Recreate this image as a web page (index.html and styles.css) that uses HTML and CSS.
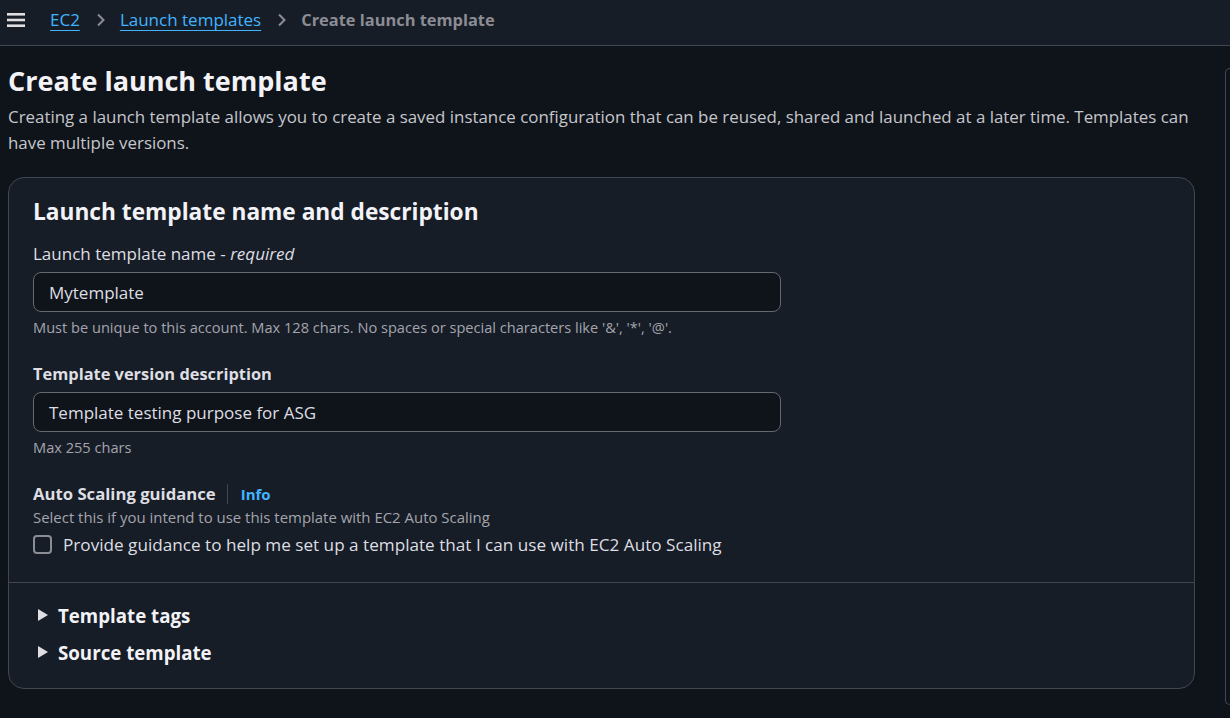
FILE: index.html
```html
<!DOCTYPE html>
<html lang="en">
<head>
<meta charset="utf-8">
<title>Create launch template</title>
<link rel="stylesheet" href="styles.css">
</head>
<body>
<header class="topbar">
  <svg class="menu-icon" width="18" height="16" viewBox="0 0 18 16"><rect x="0" y="1" width="18" height="2.6" fill="#dedee3"/><rect x="0" y="6.7" width="18" height="2.6" fill="#dedee3"/><rect x="0" y="12.4" width="18" height="2.6" fill="#dedee3"/></svg>
  <nav class="crumbs">
    <a class="crumb-link" href="#">EC2</a>
    <svg class="chev" width="10" height="14" viewBox="0 0 10 14"><polyline points="2,1.5 7.5,7 2,12.5" fill="none" stroke="#8c8c94" stroke-width="2"/></svg>
    <a class="crumb-link" href="#">Launch templates</a>
    <svg class="chev" width="10" height="14" viewBox="0 0 10 14"><polyline points="2,1.5 7.5,7 2,12.5" fill="none" stroke="#8c8c94" stroke-width="2"/></svg>
    <span class="crumb-current">Create launch template</span>
  </nav>
</header>
<div class="layout">
  <main class="main">
    <h1 class="page-title">Create launch template</h1>
    <p class="page-desc">Creating a launch template allows you to create a saved instance configuration that can be reused, shared and launched at a later time. Templates can have multiple versions.</p>
    <section class="card">
      <div class="card-body">
        <h2 class="card-title">Launch template name and description</h2>
        <div class="field first">
          <label class="label">Launch template name - <i>required</i></label>
          <div class="input">Mytemplate</div>
          <div class="hint">Must be unique to this account. Max 128 chars. No spaces or special characters like '&amp;', '*', '@'.</div>
        </div>
        <div class="field">
          <label class="label strong">Template version description</label>
          <div class="input">Template testing purpose for ASG</div>
          <div class="hint">Max 255 chars</div>
        </div>
        <div class="field">
          <div class="label-row"><span class="label strong wide">Auto Scaling guidance</span><span class="vsep"></span><a class="info" href="#">Info</a></div>
          <div class="hint tight">Select this if you intend to use this template with EC2 Auto Scaling</div>
          <div class="check-row"><span class="checkbox"></span><span class="check-label">Provide guidance to help me set up a template that I can use with EC2 Auto Scaling</span></div>
        </div>
      </div>
      <div class="card-footer">
        <div class="expander"><span class="tri"></span><span>Template tags</span></div>
        <div class="expander"><span class="tri"></span><span>Source template</span></div>
      </div>
    </section>
  </main>
  <aside class="side-panel"></aside>
</div>
</body>
</html>
```
FILE: styles.css
```css
* { box-sizing: border-box; }
html, body { margin: 0; padding: 0; }
body {
  background: #0f141a;
  color: #dedee3;
  font-family: "Open Sans", "Noto Sans", sans-serif;
  height: 718px;
  overflow: hidden;
}
.topbar {
  height: 46px;
  background: #161d26;
  border-bottom: 1px solid #424650;
  display: flex;
  align-items: center;
  padding: 0 0 6px 7px;
}
.menu-icon { display: block; margin-right: 25px; }
.crumbs { display: flex; align-items: center; font-size: 17px; }
.crumb-link { color: #42b4ff; text-decoration: underline; text-underline-offset: 4px; }
.chev { margin: 0 14px 0 16px; }
.crumb-current { color: #8c8c94; font-weight: 700; font-size: 16.4px; }
.layout { display: flex; }
.main { flex: 1; padding: 17px 30px 0 8px; }
.side-panel {
  width: 5px;
  margin-top: 22px;
  height: 637px;
  border: 1px solid #424650;
  border-right: none;
  border-radius: 16px 0 0 16px;
}
.page-title {
  margin: 0;
  font-size: 27px;
  line-height: 36px;
  font-weight: 700;
  color: #f3f3f7;
}
.page-desc {
  margin: 5px 0 0;
  font-size: 16.9px;
  line-height: 26px;
  color: #c6c6cd;
}
.card {
  margin-top: 21px;
  background: #161d26;
  border: 1px solid #424650;
  border-radius: 16px;
}
.card-body { padding: 19px 24px 26px; border-bottom: 1px solid #424650; }
.card-title { margin: 0; font-size: 22.7px; line-height: 30px; font-weight: 700; color: #f3f3f7; }
.field { margin-top: 26px; }
.field.first { margin-top: 15px; }
.label { display: block; font-size: 17px; line-height: 24px; color: #dedee3; }
.label.strong { font-weight: 700; font-size: 16.4px; }
.label.strong.wide { font-size: 16.7px; }
.label-row { display: flex; align-items: center; height: 24px; }
.vsep { width: 1px; height: 20px; background: #424650; margin: 0 13px 0 11px; }
.info { color: #42b4ff; font-weight: 700; font-size: 15px; text-decoration: none; }
.input {
  margin-top: 6px;
  width: 748px;
  height: 40px;
  border: 1px solid #656871;
  border-radius: 8px;
  background: #0f141a;
  padding: 0 15px;
  display: flex;
  align-items: center;
  font-size: 17px;
  color: #dedee3;
}
.hint { margin-top: 6px; font-size: 14.6px; line-height: 18px; color: #a4a4ad; }
.hint.tight { margin-top: 2px; font-size: 14.95px; }
.check-row { margin-top: 6px; display: flex; align-items: center; height: 24px; }
.checkbox {
  width: 19px; height: 19px;
  border: 2px solid #8c8c94;
  border-radius: 4px;
  margin-right: 11px;
}
.check-label { font-size: 17.15px; color: #dedee3; }
.card-footer { padding: 18px 24px 22px; }
.expander {
  display: flex; align-items: center;
  height: 28px;
  font-size: 18.7px; font-weight: 700; color: #f3f3f7;
}
.expander + .expander { margin-top: 9px; }
.tri {
  width: 0; height: 0;
  border-left: 10px solid #dedee3;
  border-top: 6px solid transparent;
  border-bottom: 6px solid transparent;
  margin: 0 10px 0 5px;
}
```
